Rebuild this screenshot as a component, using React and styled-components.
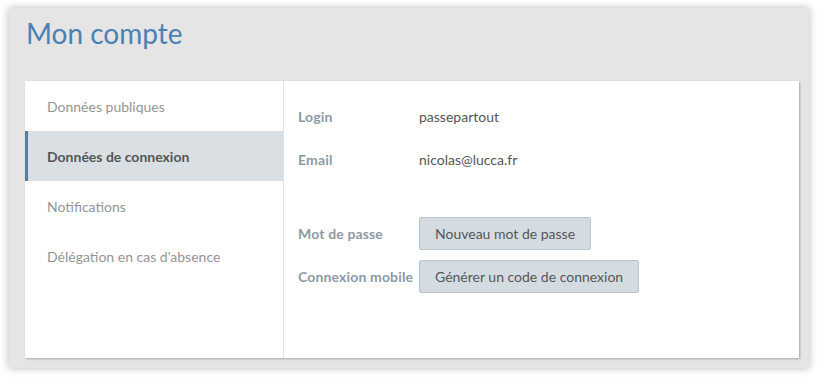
import React from "react";
import styled, { createGlobalStyle } from "styled-components";

const Global = createGlobalStyle`
  html, body { margin: 0; padding: 0; background: #ffffff; }
  body { font-family: Lato, "Open Sans", sans-serif; }
  * { box-sizing: border-box; }
`;

const Frame = styled.div`
  margin: 8px 9px 9px 9px;
  height: 360px;
  background: #e5e5e5;
  box-shadow: 0 0 8px rgba(0, 0, 0, 0.28);
  display: flex;
  flex-direction: column;
  padding: 0 10px 10px 16px;
`;

const Header = styled.div`
  height: 73px;
  display: flex;
  align-items: flex-start;
  padding-top: 7px;
`;

const Title = styled.h1`
  margin: 0;
  padding-left: 1px;
  font-family: Lato, sans-serif;
  font-weight: 400;
  font-size: 28px;
  line-height: 36px;
  color: #4b80b4;
`;

const Card = styled.div`
  flex: 1;
  background: #ffffff;
  display: flex;
  box-shadow: 1px 1px 2px rgba(0, 0, 0, 0.28);
`;

const Sidebar = styled.nav`
  width: 259px;
  border-right: 1px solid #e2e2e2;
  display: flex;
  flex-direction: column;
`;

const NavItem = styled.div`
  height: 50px;
  display: flex;
  align-items: center;
  padding-left: ${(p) => (p.$active ? "19px" : "22px")};
  border-left: ${(p) => (p.$active ? "3px solid #4b80b4" : "none")};
  background: ${(p) => (p.$active ? "#d9dfe3" : "transparent")};
  color: ${(p) => (p.$active ? "#555555" : "#959595")};
  font-weight: ${(p) => (p.$active ? 700 : 400)};
  font-size: 14px;
`;

const Content = styled.div`
  flex: 1;
  padding: 14px 0 0 14px;
  display: flex;
  flex-direction: column;
`;

const Row = styled.div`
  height: 43px;
  display: flex;
  align-items: center;
  margin-top: ${(p) => (p.$gap ? "31px" : "0")};
`;

const Label = styled.div`
  width: 121px;
  flex-shrink: 0;
  white-space: nowrap;
  color: #8c9aa6;
  font-weight: 700;
  font-size: 14px;
  letter-spacing: 0.15px;
`;

const Value = styled.div`
  color: #555555;
  font-size: 14px;
`;

const Button = styled.button`
  height: 33px;
  padding: 0 15px;
  background: #d5dce1;
  border: 1px solid #bcc5cc;
  border-radius: 2px;
  color: #555555;
  font-family: Lato, sans-serif;
  font-size: 14px;
  cursor: pointer;
`;

export default function App() {
  return (
    <>
      <Global />
      <Frame>
        <Header>
          <Title>Mon compte</Title>
        </Header>
        <Card>
          <Sidebar>
            <NavItem>Données publiques</NavItem>
            <NavItem $active>Données de connexion</NavItem>
            <NavItem>Notifications</NavItem>
            <NavItem>Délégation en cas d'absence</NavItem>
          </Sidebar>
          <Content>
            <Row>
              <Label>Login</Label>
              <Value>passepartout</Value>
            </Row>
            <Row>
              <Label>Email</Label>
              <Value>nicolas@lucca.fr</Value>
            </Row>
            <Row $gap>
              <Label>Mot de passe</Label>
              <Button>Nouveau mot de passe</Button>
            </Row>
            <Row>
              <Label>Connexion mobile</Label>
              <Button>Générer un code de connexion</Button>
            </Row>
          </Content>
        </Card>
      </Frame>
    </>
  );
}
